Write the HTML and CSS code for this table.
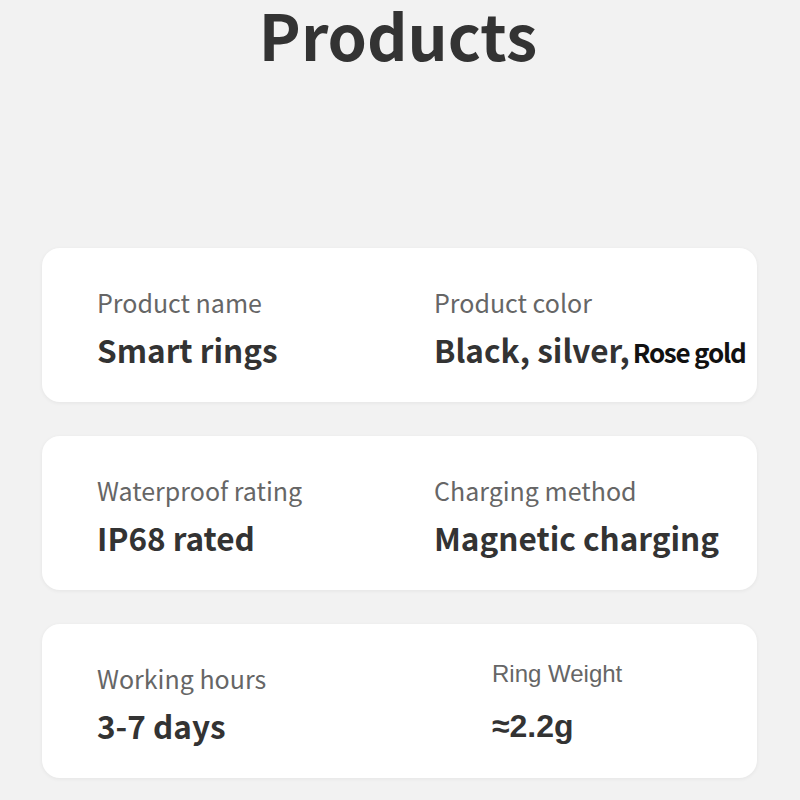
FILE: index.html
```html
<!DOCTYPE html>
<html>
<head>
<meta charset="utf-8">
<link rel="stylesheet" href="styles.css">
</head>
<body>
<h1 class="title">Products</h1>
<div class="cards">
  <div class="card">
    <div class="item">
      <div class="label">Product name</div>
      <div class="value">Smart rings</div>
    </div>
    <div class="item">
      <div class="label">Product color</div>
      <div class="value">Black, silver,<span class="rose">Rose gold</span></div>
    </div>
  </div>
  <div class="card">
    <div class="item">
      <div class="label">Waterproof rating</div>
      <div class="value">IP68 rated</div>
    </div>
    <div class="item">
      <div class="label">Charging method</div>
      <div class="value">Magnetic charging</div>
    </div>
  </div>
  <div class="card">
    <div class="item">
      <div class="label">Working hours</div>
      <div class="value">3-7 days</div>
    </div>
    <div class="item item-arial">
      <div class="label">Ring Weight</div>
      <div class="value">≈2.2g</div>
    </div>
  </div>
</div>
</body>
</html>
```

FILE: styles.css
```css
html, body {
  margin: 0;
  padding: 0;
  background: #f2f2f2;
}
body {
  font-family: "Noto Sans CJK SC", "Noto Sans", sans-serif;
  color: #333;
  width: 800px;
  height: 800px;
  overflow: hidden;
}
.title {
  margin: 0;
  font-size: 63px;
  line-height: 66px;
  padding-top: 1px;
  font-weight: 700;
  text-align: center;
  color: #333;
  padding-right: 4px;
}
.cards {
  margin: 181px 43px 0 42px;
  display: flex;
  flex-direction: column;
  gap: 34px;
}
.card {
  background: #fff;
  border-radius: 18px;
  height: 154px;
  box-sizing: border-box;
  padding: 42px 0 0 55px;
  display: grid;
  grid-template-columns: 337px 1fr;
  box-shadow: 0 1px 4px rgba(0,0,0,0.06);
}
.label {
  font-size: 25px;
  line-height: 24px;
  color: #666;
  font-weight: 400;
}
.value {
  margin-top: 20px;
  font-size: 31.5px;
  line-height: 31px;
  font-weight: 700;
  color: #333;
  white-space: nowrap;
}
.rose {
  font-size: 26px;
  color: #111;
  letter-spacing: -1.2px;
  margin-left: 3px;
}
.item-arial {
  font-family: "Liberation Sans", Arial, sans-serif;
  padding-left: 58px;
}
.item-arial .label {
  font-size: 24px;
  margin-top: -4px;
}
.item-arial .value {
  font-size: 32px;
  margin-top: 25px;
}
```
